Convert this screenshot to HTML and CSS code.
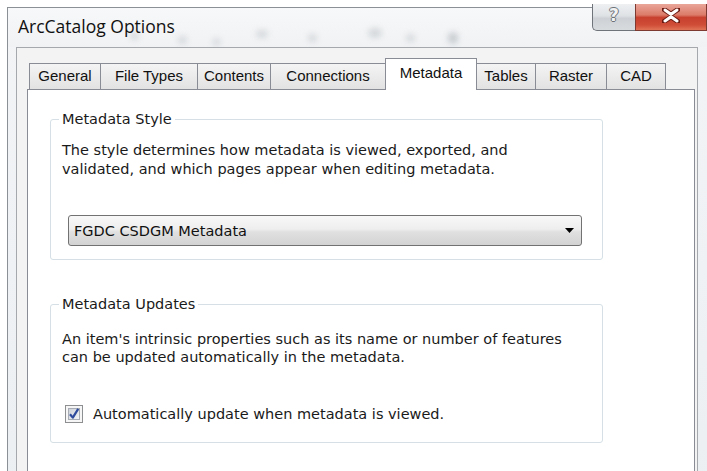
FILE: index.html
```html
<!DOCTYPE html>
<html lang="en">
<head>
<meta charset="utf-8">
<title>ArcCatalog Options</title>
<link rel="stylesheet" href="styles.css">
</head>
<body>
<div class="window">
  <div class="titlebar">
    <div class="glass" aria-hidden="true">
      <span class="blob b1"></span><span class="blob b2"></span><span class="blob b3"></span>
      <span class="blob b4"></span><span class="blob b5"></span><span class="blob b6"></span>
      <span class="blob b7"></span><span class="blob b8"></span>
    </div>
    <span class="title">ArcCatalog Options</span>
    <div class="caption-buttons">
      <div class="cbtn help"><span class="help-glyph">?</span></div>
      <div class="cbtn close">
        <svg width="18" height="15" viewBox="0 0 18 15">
          <path d="M2 1.5 L9 6 L16 1.5 M2 13.5 L9 9 L16 13.5" fill="none" stroke="#6b1a12" stroke-width="5" stroke-linecap="round"/>
          <path d="M3 2 L9 6.3 L15 2 M3 13 L9 8.7 L15 13 M9 6.3 L9 8.7" fill="none" stroke="#ffffff" stroke-width="3" stroke-linecap="round"/>
        </svg>
      </div>
    </div>
  </div>
  <div class="frame">
    <div class="client">
      <div class="tabs">
        <div class="tab t-general">General</div>
        <div class="tab t-filetypes">File Types</div>
        <div class="tab t-contents">Contents</div>
        <div class="tab t-connections">Connections</div>
        <div class="tab t-metadata selected">Metadata</div>
        <div class="tab t-tables">Tables</div>
        <div class="tab t-raster">Raster</div>
        <div class="tab t-cad">CAD</div>
      </div>
      <div class="panel">
        <fieldset class="group group-style">
          <legend>Metadata Style</legend>
          <p class="desc">The style determines how metadata is viewed, exported, and<br>validated, and which pages appear when editing metadata.</p>
          <div class="combo">
            <span class="combo-text">FGDC CSDGM Metadata</span>
            <svg class="combo-arrow" width="9" height="5" viewBox="0 0 9 5"><path d="M0 0 H9 L4.5 5 Z" fill="#000"/></svg>
          </div>
        </fieldset>
        <fieldset class="group group-updates">
          <legend>Metadata Updates</legend>
          <p class="desc">An item's intrinsic properties such as its name or number of features<br>can be updated automatically in the metadata.</p>
          <label class="check-row">
            <svg class="checkbox" width="18" height="18" viewBox="0 0 18 18">
              <defs>
                <linearGradient id="boxfill" x1="0" y1="0" x2="1" y2="1">
                  <stop offset="0" stop-color="#cbd0d8"/>
                  <stop offset="1" stop-color="#f4f5f7"/>
                </linearGradient>
              </defs>
              <rect x="0.5" y="0.5" width="17" height="17" fill="#f6f6f6" stroke="#8e8f91"/>
              <rect x="3.5" y="3.5" width="11" height="11" fill="url(#boxfill)" stroke="#a8adb5"/>
              <path d="M5 9.2 L7.8 12.6 L13.2 3.8" fill="none" stroke="#2e4a9c" stroke-width="2.2" stroke-linejoin="round"/>
            </svg>
            <span class="check-label">Automatically update when metadata is viewed.</span>
          </label>
        </fieldset>
      </div>
    </div>
  </div>
</div>
</body>
</html>
```

FILE: styles.css
```css
html, body {
  margin: 0;
  padding: 0;
}

body {
  width: 707px;
  height: 471px;
  overflow: hidden;
  background: #ffffff;
  font-family: "DejaVu Sans", "Noto Sans", sans-serif;
  color: #1a1a1a;
}

/* Outer dialog window */
.window {
  margin: 7px 0 0 7px;
  border-top: 1px solid #8b9096;
  border-left: 1px solid #8b9096;
  background: linear-gradient(180deg, #f2f4f6 0%, #eceff2 100%);
  height: 520px;
}

/* Glass caption bar */
.titlebar {
  position: relative;
  height: 39px;
  display: flex;
  align-items: flex-start;
  background: linear-gradient(180deg, #f7f8f9 0%, #f0f2f4 100%);
}

.glass {
  position: absolute;
  inset: 0;
  overflow: hidden;
}

.blob {
  position: absolute;
  width: 9px;
  height: 8px;
  border-radius: 50%;
  background: #9aa0a6;
  opacity: 0.35;
  filter: blur(3px);
}
.b1 { left: 122px; top: 24px; }
.b2 { left: 170px; top: 28px; }
.b3 { left: 248px; top: 22px; width: 12px; }
.b4 { left: 300px; top: 26px; }
.b5 { left: 360px; top: 20px; width: 14px; height: 10px; }
.b6 { left: 398px; top: 26px; }
.b7 { left: 440px; top: 24px; width: 10px; height: 12px; opacity: 0.5; }
.b8 { left: 205px; top: 30px; width: 7px; }

.title {
  position: relative;
  padding: 7px 0 0 10px;
  font-family: "Open Sans", "Noto Sans", sans-serif;
  font-size: 17.5px;
  line-height: 22px;
  color: #111;
}

.caption-buttons {
  position: relative;
  margin-left: auto;
  margin-top: -4px;
  display: flex;
}

.cbtn {
  height: 27px;
  box-sizing: border-box;
  border: 1px solid #6f747a;
  border-top: none;
  display: flex;
  align-items: center;
  justify-content: center;
}

.help {
  width: 43px;
  border-right: none;
  border-bottom-left-radius: 5px;
  background: linear-gradient(180deg, #eef0f2 0%, #dfe2e5 45%, #cdd1d5 55%, #d8dbde 100%);
}

.help-glyph {
  font-family: "DejaVu Sans", sans-serif;
  font-weight: bold;
  font-size: 17px;
  line-height: 1;
  color: #f2f2f2;
  text-shadow: -1px 0 #6d7278, 1px 0 #6d7278, 0 -1px #6d7278, 0 1px #6d7278;
  margin-top: -4px;
}

.close {
  width: 72px;
  background: linear-gradient(180deg, #e9a699 0%, #dc7b69 42%, #c8412f 52%, #cf4c36 80%, #e07355 100%);
  border-color: #7c3a31;
}

.close svg {
  margin-top: -4px;
}

/* Client area */
.frame {
  padding: 0 9px 0 8px;
}

.client {
  border: 1px solid #a5a9ae;
  border-bottom: none;
  background: #f3f3f3;
  padding: 10px 2px 0 10px;
  height: 500px;
}

/* Tab strip */
.tabs {
  position: relative;
  z-index: 1;
  display: flex;
  align-items: flex-end;
  height: 32px;
  margin-bottom: -1px;
  padding-left: 3px;
}

.tab {
  flex: none;
  box-sizing: border-box;
  height: 26px;
  margin-left: -1px;
  margin-bottom: 1px;
  border: 1px solid #898c95;
  border-bottom: none;
  background: linear-gradient(180deg, #f4f4f4 0%, #ebebeb 50%, #e2e2e2 100%);
  font-family: "Liberation Sans", Arial, sans-serif;
  font-size: 15px;
  line-height: 24px;
  text-align: center;
  color: #111;
  white-space: nowrap;
}

.tab.selected {
  position: relative;
  height: 32px;
  margin-bottom: 0;
  background: #ffffff;
  line-height: 28px;
}

.t-general { width: 72px; }
.t-filetypes { width: 98px; }
.t-contents { width: 74px; }
.t-connections { width: 116px; }
.t-metadata { width: 92px; }
.t-tables { width: 60px; }
.t-raster { width: 72px; }
.t-cad { width: 60px; }

/* Tab page */
.panel {
  border: 1px solid #898c95;
  border-bottom: none;
  background: #ffffff;
  padding: 0 0 0 22px;
  height: 420px;
}

.group {
  box-sizing: border-box;
  width: 553px;
  border: 1px solid #d5dfe5;
  border-radius: 3px;
  margin: 0;
  padding: 0 0 0 11px;
  min-width: 0;
}

.group legend {
  padding: 0 3px;
  margin-left: -3px;
  font-size: 14.5px;
  line-height: 18px;
  color: #1a1a1a;
}

.group-style {
  margin-top: 20px;
  padding-bottom: 13px;
}

.group-updates {
  margin-top: 35px;
  padding-bottom: 19px;
}

.desc {
  margin: 0;
  font-size: 14.5px;
  color: #1a1a1a;
}

.group-style .desc {
  margin-top: 13px;
  line-height: 19px;
}

.group-updates .desc {
  margin-top: 17px;
  line-height: 18px;
}

/* Drop-down list */
.combo {
  box-sizing: border-box;
  width: 514px;
  height: 31px;
  margin: 36px 0 0 6px;
  padding: 0 7px 0 5px;
  border: 1px solid #727272;
  border-radius: 3px;
  background: linear-gradient(180deg, #f8f8f8 0%, #eeeeee 45%, #e0e0e0 55%, #d3d3d3 100%);
  display: flex;
  align-items: center;
  justify-content: space-between;
}

.combo-text {
  font-size: 14.5px;
  color: #111;
}

/* Check box row */
.check-row {
  display: flex;
  align-items: center;
  height: 19px;
  margin: 38px 0 0 3px;
}

.checkbox {
  flex: none;
}

.check-label {
  margin-left: 10px;
  font-size: 14.5px;
  color: #1a1a1a;
}
```
